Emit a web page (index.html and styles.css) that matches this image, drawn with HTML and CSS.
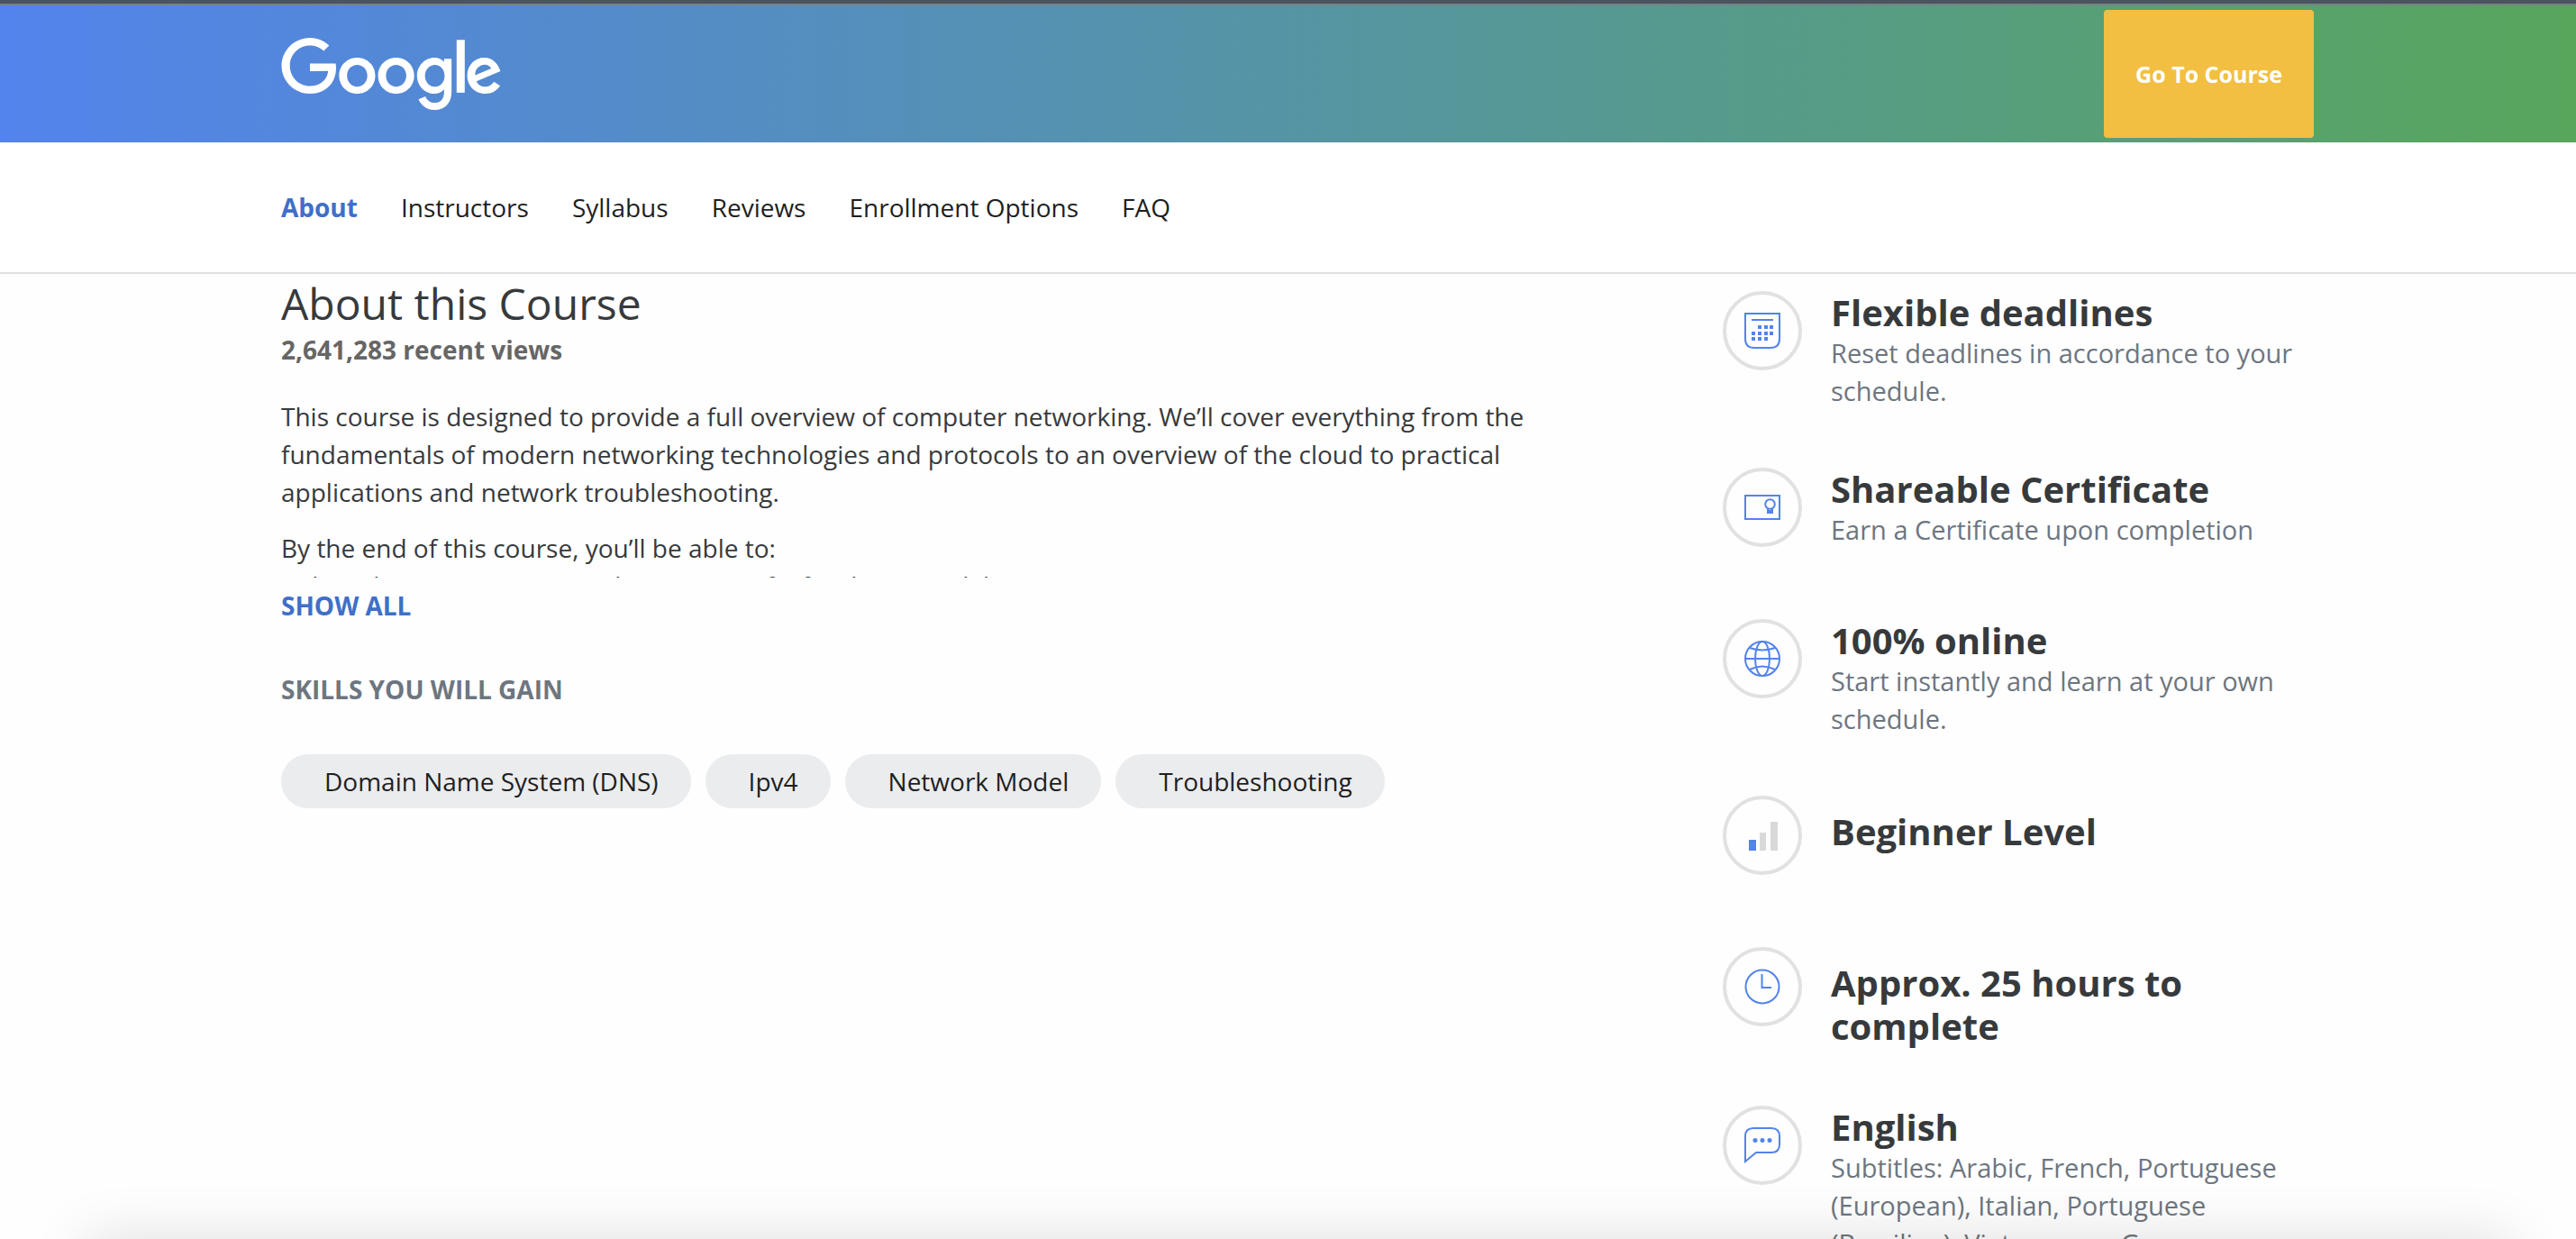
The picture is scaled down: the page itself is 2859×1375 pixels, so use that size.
FILE: index.html
```html
<!DOCTYPE html>
<html lang="en">
<head>
<meta charset="utf-8">
<title>About this Course</title>
<link rel="stylesheet" href="styles.css">
</head>
<body>
<header class="banner">
  <a class="logo" href="#" aria-label="Google">
    <svg viewBox="0.36 0.47 269.7 88.8" width="244" height="80" fill="#fff" aria-hidden="true">
      <path d="M35.29 41.41V32H67c.31 1.64.47 3.58.47 5.68 0 7.06-1.93 15.79-8.15 22.01-6.05 6.3-13.78 9.66-24.02 9.66C16.32 69.35.36 53.89.36 34.91.36 15.93 16.32.47 35.3.47c10.5 0 17.98 4.12 23.6 9.49l-6.64 6.64c-4.03-3.78-9.49-6.72-16.97-6.72-13.86 0-24.7 11.17-24.7 25.03 0 13.86 10.84 25.03 24.7 25.03 8.99 0 14.11-3.61 17.39-6.89 2.66-2.66 4.41-6.46 5.1-11.65z"/>
      <path d="M115.75 47.18c0 12.77-9.99 22.18-22.25 22.18s-22.25-9.41-22.25-22.18C71.25 34.32 81.24 25 93.5 25s22.25 9.32 22.25 22.18zm-9.74 0c0-7.98-5.79-13.44-12.51-13.44S80.99 39.2 80.99 47.18c0 7.9 5.79 13.44 12.51 13.44s12.51-5.55 12.51-13.44z"/>
      <path d="M163.75 47.18c0 12.77-9.99 22.18-22.25 22.18s-22.25-9.41-22.25-22.18c0-12.86 9.99-22.18 22.25-22.18s22.25 9.32 22.25 22.18zm-9.74 0c0-7.98-5.79-13.44-12.51-13.44s-12.51 5.46-12.51 13.44c0 7.9 5.79 13.44 12.51 13.44s12.51-5.55 12.51-13.44z"/>
      <path d="M209.75 26.34v39.82c0 16.38-9.66 23.07-21.08 23.07-10.75 0-17.22-7.19-19.66-13.07l8.48-3.53c1.51 3.61 5.21 7.87 11.17 7.87 7.31 0 11.84-4.51 11.84-13v-3.19h-.34c-2.18 2.69-6.38 5.04-11.68 5.04-11.09 0-21.25-9.66-21.25-22.09 0-12.52 10.16-22.26 21.25-22.26 5.29 0 9.49 2.35 11.68 4.96h.34v-3.61h9.25zm-8.56 20.92c0-7.81-5.21-13.52-11.84-13.52-6.72 0-12.35 5.71-12.35 13.52 0 7.73 5.63 13.36 12.35 13.36 6.63 0 11.84-5.63 11.84-13.36z"/>
      <path d="M226 3v65h-10V3z"/>
      <path d="M262.02 54.48l7.56 5.04c-2.44 3.61-8.32 9.83-18.48 9.83-12.6 0-22.01-9.74-22.01-22.18 0-13.19 9.49-22.18 20.92-22.18 11.51 0 17.14 9.16 18.98 14.11l1.01 2.52-29.65 12.28c2.27 4.45 5.8 6.72 10.75 6.72 4.96 0 8.4-2.44 10.92-6.14zm-23.27-7.98l19.82-8.23c-1.09-2.77-4.37-4.7-8.23-4.7-4.95 0-11.84 4.37-11.59 12.93z"/>
    </svg>
  </a>
  <button class="cta" type="button">Go To Course</button>
</header>

<nav class="tabs" aria-label="Course sections">
  <a class="tab tab-active" href="#about">About</a>
  <a class="tab" href="#instructors">Instructors</a>
  <a class="tab" href="#syllabus">Syllabus</a>
  <a class="tab" href="#reviews">Reviews</a>
  <a class="tab" href="#enrollment">Enrollment Options</a>
  <a class="tab" href="#faq">FAQ</a>
</nav>

<main class="content" id="about">
  <section class="about">
    <h1 class="title">About this Course</h1>
    <p class="views">2,641,283 recent views</p>
    <div class="description">
      <p>This course is designed to provide a full overview of computer networking. We’ll cover everything from the fundamentals of modern networking technologies and protocols to an overview of the cloud to practical applications and network troubleshooting.</p>
      <p>By the end of this course, you’ll be able to:<br>● describe computer networks in terms of a five-layer model</p>
    </div>
    <button class="show-all" type="button">SHOW ALL</button>
    <h2 class="skills-title">SKILLS YOU WILL GAIN</h2>
    <ul class="skills">
      <li class="chip">Domain Name System (DNS)</li>
      <li class="chip">Ipv4</li>
      <li class="chip">Network Model</li>
      <li class="chip">Troubleshooting</li>
    </ul>
  </section>

  <aside class="facts">
    <div class="fact">
      <span class="badge">
        <svg class="icon" viewBox="0 0 40 40" aria-hidden="true">
          <path class="line" d="M1 1h38v28q0 10-10 10H11Q1 39 1 29zM8 8h24"/>
          <path class="solid" d="M15 14h4v4h-4zm7 0h4v4h-4zm6 0h4v4h-4zM8 21h4v4H8zm7 0h4v4h-4zm7 0h4v4h-4zm6 0h4v4h-4zM8 27h4v4H8zm7 0h4v4h-4zm7 0h4v4h-4z"/>
        </svg>
      </span>
      <div class="fact-text">
        <h3 class="fact-title">Flexible deadlines</h3>
        <p class="fact-note">Reset deadlines in accordance to your schedule.</p>
      </div>
    </div>
    <div class="fact">
      <span class="badge">
        <svg class="icon" viewBox="0 0 40 40" aria-hidden="true">
          <path class="line" d="M1 7h38v26H1zM26 21v5h5v-5M26 24h5"/>
          <circle class="line" cx="28.5" cy="16.5" r="5.3"/>
        </svg>
      </span>
      <div class="fact-text">
        <h3 class="fact-title">Shareable Certificate</h3>
        <p class="fact-note">Earn a Certificate upon completion</p>
      </div>
    </div>
    <div class="fact">
      <span class="badge">
        <svg class="icon" viewBox="0 0 40 40" aria-hidden="true">
          <circle class="line" cx="20" cy="20" r="19"/>
          <ellipse class="line" cx="20" cy="20" rx="8" ry="19"/>
          <path class="line" d="M1 20h38M6 8q14 5 28 0M6 32q14-7 28 0"/>
        </svg>
      </span>
      <div class="fact-text">
        <h3 class="fact-title">100% online</h3>
        <p class="fact-note">Start instantly and learn at your own schedule.</p>
      </div>
    </div>
    <div class="fact">
      <span class="badge">
        <svg class="icon" viewBox="0 0 40 40" aria-hidden="true">
          <path class="solid" d="M5 25h8v12H5z"/>
          <path fill="#d9d9d9" d="M17 17h7v20h-7zM29 5h8v32h-8z"/>
        </svg>
      </span>
      <div class="fact-text fact-plain">
        <h3 class="fact-title">Beginner Level</h3>
      </div>
    </div>
    <div class="fact">
      <span class="badge">
        <svg class="icon" viewBox="0 0 40 40" aria-hidden="true">
          <circle class="line" cx="20" cy="20" r="18.5"/>
          <path class="line" d="M19.500 6v15H30"/>
        </svg>
      </span>
      <div class="fact-text fact-plain">
        <h3 class="fact-title">Approx. 25 hours to complete</h3>
      </div>
    </div>
    <div class="fact">
      <span class="badge">
        <svg class="icon" viewBox="0 0 40 40" aria-hidden="true">
          <path class="line" d="M1 38V10q0-9 9-9h20q9 0 9 9v9q0 9-9 9H13z"/>
          <circle class="solid" cx="12" cy="14.5" r="2.5"/>
          <circle class="solid" cx="20" cy="14.5" r="2.5"/>
          <circle class="solid" cx="28" cy="14.5" r="2.5"/>
        </svg>
      </span>
      <div class="fact-text">
        <h3 class="fact-title">English</h3>
        <p class="fact-note">Subtitles: Arabic, French, Portuguese (European), Italian, Portuguese (Brazilian), Vietnamese, German, Russian, English, Spanish</p>
      </div>
    </div>
  </aside>
</main>
<div class="bottom-bar" aria-hidden="true"></div>
</body>
</html>
```
FILE: styles.css
```css
* {
  box-sizing: border-box;
}

html {
  height: 100%;
  overflow: hidden;
}

body {
  height: 100%;
  margin: 0;
  overflow: hidden;
  background: #fefefe;
  color: #373a3c;
  font: 28px/42px "Open Sans", "Noto Sans", sans-serif;
}

h1, h2, h3, p, ul {
  margin: 0;
  padding: 0;
}

button {
  border: 0;
  font: inherit;
  cursor: pointer;
}

a {
  color: inherit;
  text-decoration: none;
}

.banner, .tabs, .content {
  padding-left: 312px;
  padding-right: 291px;
}

.banner {
  display: flex;
  align-items: center;
  justify-content: space-between;
  padding-top: 7px;
  padding-bottom: 5px;
  border-top: 4px solid #48545e;
  background: linear-gradient(90deg, #5383ec, #58a65c) border-box;
  box-shadow: inset 0 2px #7a8085;
}

.logo svg {
  display: block;
}

.cta {
  padding: 50px 35px;
  border-radius: 4px;
  background: #f2bf42;
  color: #fff;
  font-size: 25px;
  font-weight: 700;
}

.tabs {
  display: flex;
  gap: 48px;
  padding-top: 51px;
  padding-bottom: 51px;
  border-bottom: 2px solid #e1e1e1;
  background: #fff;
  color: #1f1f1f;
}

.tab-active {
  color: #3f6fc8;
  font-weight: 700;
}

.content {
  display: flex;
  justify-content: space-between;
}

.about {
  width: 1400px;
  padding-top: 3px;
}

.title {
  font-size: 48px;
  font-weight: 400;
  line-height: 60px;
}

.views {
  color: #666;
  font-weight: 700;
}

.description {
  display: flex;
  flex-direction: column;
  gap: 20px;
  max-height: 200px;
  margin-top: 32px;
  overflow: hidden;
}

.show-all {
  display: block;
  margin-top: 10px;
  padding: 0;
  background: none;
  color: #3f6fc8;
  font-weight: 700;
}

.skills-title {
  margin-top: 51px;
  color: #6d7680;
  font-size: 28px;
  font-weight: 700;
}

.skills {
  display: flex;
  flex-wrap: wrap;
  gap: 16px;
  margin-top: 51px;
  list-style: none;
}

.chip {
  padding: 9px 36px 9px 48px;
  border-radius: 30px;
  background: #ebecee;
  color: #1f1f1f;
}

.facts {
  display: flex;
  flex-direction: column;
  gap: 64px;
  width: 656px;
  padding-top: 19px;
}

.fact {
  display: flex;
  gap: 32px;
}

.badge {
  display: flex;
  flex: none;
  align-items: center;
  justify-content: center;
  width: 88px;
  height: 88px;
  margin-bottom: 16px;
  border: 4px solid #e1e1e1;
  border-radius: 50%;
}

.icon {
  width: 40px;
  height: 40px;
}

.line {
  fill: none;
  stroke: #5383ec;
  stroke-width: 2;
}

.solid {
  fill: #5383ec;
}

.fact-plain {
  padding-top: 16px;
}

.fact-title {
  font-size: 40px;
  font-weight: 700;
  line-height: 48px;
}

.fact-note {
  color: #6d7680;
  font-size: 29px;
}

/* soft shadow of the bar docked under the window */
.bottom-bar {
  position: fixed;
  right: 72px;
  bottom: -80px;
  left: 96px;
  height: 80px;
  box-shadow: 0 0 64px rgba(0, 0, 0, 0.13);
}
```
